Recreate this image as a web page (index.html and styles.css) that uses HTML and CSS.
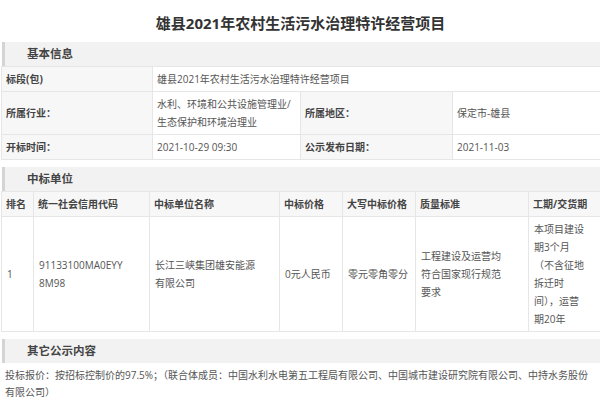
FILE: index.html
```html
<!DOCTYPE html>
<html lang="zh-CN">
<head>
<meta charset="utf-8">
<title>雄县2021年农村生活污水治理特许经营项目</title>
<link rel="stylesheet" href="styles.css">
</head>
<body>
<div class="page">
  <h1 class="title">雄县2021年农村生活污水治理特许经营项目</h1>

  <section class="block">
    <h2 class="section-head">基本信息</h2>
    <table class="info">
      <colgroup>
        <col class="c-l1"><col class="c-v1"><col class="c-l2"><col class="c-v2">
      </colgroup>
      <tr>
        <th>标段(包)</th>
        <td colspan="3">雄县2021年农村生活污水治理特许经营项目</td>
      </tr>
      <tr>
        <th>所属行业：</th>
        <td>水利、环境和公共设施管理业/<br>生态保护和环境治理业</td>
        <th>所属地区：</th>
        <td>保定市-雄县</td>
      </tr>
      <tr>
        <th>开标时间：</th>
        <td>2021-10-29 09:30</td>
        <th>公示发布日期：</th>
        <td>2021-11-03</td>
      </tr>
    </table>
  </section>

  <section class="block">
    <h2 class="section-head">中标单位</h2>
    <table class="winners">
      <colgroup>
        <col class="w1"><col class="w2"><col class="w3"><col class="w4"><col class="w5"><col class="w6"><col class="w7">
      </colgroup>
      <tr>
        <th>排名</th>
        <th>统一社会信用代码</th>
        <th>中标单位名称</th>
        <th>中标价格</th>
        <th>大写中标价格</th>
        <th>质量标准</th>
        <th>工期/交货期</th>
      </tr>
      <tr>
        <td>1</td>
        <td>91133100MA0EYY<br>8M98</td>
        <td>长江三峡集团雄安能源<br>有限公司</td>
        <td>0元人民币</td>
        <td>零元零角零分</td>
        <td>工程建设及运营均<br>符合国家现行规范<br>要求</td>
        <td>本项目建设<br>期3个月<br>（不含征地<br>拆迁时<br>间），运营<br>期20年</td>
      </tr>
    </table>
  </section>

  <section class="block notes">
    <h2 class="section-head">其它公示内容</h2>
    <p>投标报价：按招标控制价的97.5%；（联合体成员：中国水利水电第五工程局有限公司、中国城市建设研究院有限公司、中持水务股份<br>有限公司）</p>
  </section>
</div>
</body>
</html>
```

FILE: styles.css
```css
body {
  margin: 0;
  background: #fff;
  font-family: "Open Sans", "Noto Sans CJK SC", sans-serif;
  font-size: 10px;
  color: #555;
}

.page {
  padding-left: 1px;
  overflow: hidden;
}

.title {
  margin: 0;
  height: 42px;
  padding-top: 3px;
  box-sizing: border-box;
  display: flex;
  align-items: center;
  justify-content: center;
  font-size: 15px;
  font-weight: bold;
  color: #333;
}

.section-head {
  margin: 0 0 0 1px;
  height: 24px;
  line-height: 24px;
  background: #f2f2f2;
  border-left: 3px solid #d4d4d4;
  padding-left: 22px;
  font-size: 11.5px;
  font-weight: bold;
  color: #444;
}

.block + .block {
  margin-top: 7px;
}

table {
  border-collapse: collapse;
  table-layout: fixed;
  width: 599px;
}

th,
td {
  border: 1px solid #e6e6e6;
  padding: 3px 4px;
  line-height: 18px;
  text-align: left;
  vertical-align: middle;
  font-size: 10px;
}

th {
  background: #f7f7f7;
  font-weight: bold;
  color: #444;
}

td {
  background: #fff;
  color: #555;
}

.c-l1 { width: 151px; }
.c-v1 { width: 148px; }
.c-l2 { width: 152px; }
.c-v2 { width: 148px; }

.w1 { width: 32px; }
.w2 { width: 116px; }
.w3 { width: 130px; }
.w4 { width: 63px; }
.w5 { width: 73px; }
.w6 { width: 113px; }
.w7 { width: 72px; }

.winners td {
  padding-left: 5px;
}

.notes p {
  margin: 0;
  padding: 4px 4px;
  line-height: 17px;
  font-size: 10px;
  color: #555;
}
```
